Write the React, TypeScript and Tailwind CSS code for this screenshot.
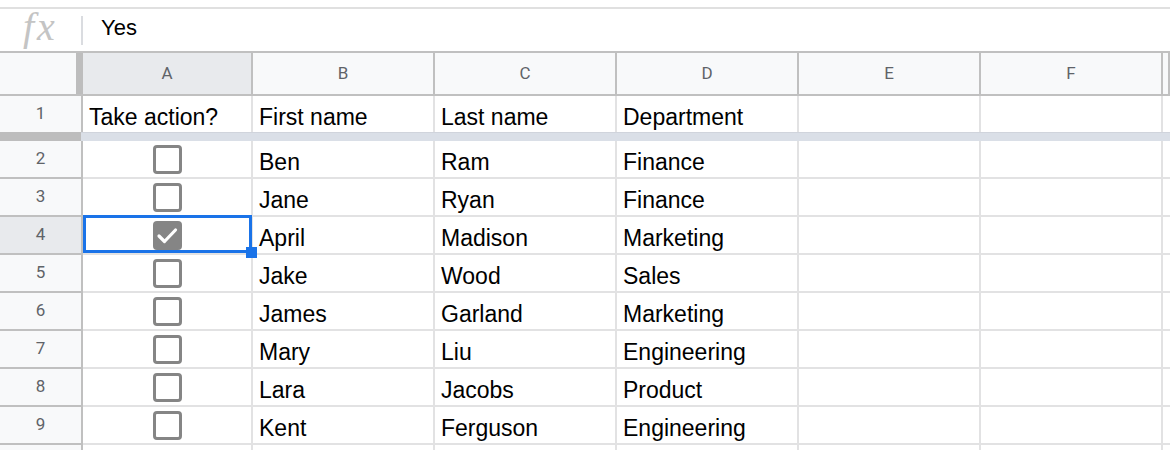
import React from 'react';

type Person = { first: string; last: string; dept: string; done: boolean };

const people: Person[] = [
  { first: 'Ben', last: 'Ram', dept: 'Finance', done: false },
  { first: 'Jane', last: 'Ryan', dept: 'Finance', done: false },
  { first: 'April', last: 'Madison', dept: 'Marketing', done: true },
  { first: 'Jake', last: 'Wood', dept: 'Sales', done: false },
  { first: 'James', last: 'Garland', dept: 'Marketing', done: false },
  { first: 'Mary', last: 'Liu', dept: 'Engineering', done: false },
  { first: 'Lara', last: 'Jacobs', dept: 'Product', done: false },
  { first: 'Kent', last: 'Ferguson', dept: 'Engineering', done: false },
];

const columns = ['A', 'B', 'C', 'D', 'E', 'F', ''];

const gridCols = 'grid grid-cols-[83px_170px_182px_182px_182px_182px_182px_1fr]';
const cellText = "flex items-end pb-[2px] pl-[6px] text-[23px] leading-[26px] text-black font-['Liberation_Sans',Arial,sans-serif] whitespace-nowrap overflow-hidden";
const headText = "flex items-center justify-center text-[17px] text-[#5f6368] font-['Roboto',sans-serif]";

const Checkbox = ({ checked }: { checked: boolean }) =>
  checked ? (
    <div className="w-[29px] h-[29px] rounded-[4px] bg-[#858585] flex items-center justify-center">
      <svg width="29" height="29" viewBox="0 0 29 29">
        <polyline points="6,15 11.5,20.5 22.5,9" fill="none" stroke="#fff" strokeWidth="3.2" strokeLinecap="round" strokeLinejoin="round" />
      </svg>
    </div>
  ) : (
    <div className="w-[29px] h-[29px] rounded-[4px] border-[3px] border-[#858585] bg-white" />
  );

export default function App() {
  return (
    <div className="w-[1170px] h-[450px] overflow-hidden bg-white">
      {/* formula bar */}
      <div className="h-[7px]" />
      <div className="h-[2px] bg-[#e0e0e0]" />
      <div className="h-[42px] flex items-center">
        <span className="w-[81px] pl-[23px] text-[40px] leading-none italic text-[#c4c4c4] font-['Liberation_Serif',serif] tracking-[3px] -mt-[6px]">
          fx
        </span>
        <div className="w-[2px] h-[29px] bg-[#dadce0]" />
        <span className="pl-[18px] text-[22px] leading-none text-black font-['Liberation_Sans',Arial,sans-serif] -mt-[5px]">
          Yes
        </span>
      </div>
      <div className="h-[2px] bg-[#c0c0c0]" />

      {/* column headers */}
      <div className={`${gridCols} h-[43px]`}>
        <div className="bg-[#f8f9fa] border-b-2 border-[#c0c0c0] flex justify-end">
          <div className="w-[7px] h-full bg-[#bdbdbd]" />
        </div>
        {columns.map((c, i) => (
          <div
            key={i}
            className={`${headText} border-b-2 border-r-2 border-[#c0c0c0] ${c === 'A' ? 'bg-[#e8eaed]' : 'bg-[#f8f9fa]'}`}
          >
            {c}
          </div>
        ))}
      </div>

      {/* frozen header row */}
      <div className={`${gridCols} h-[36px]`}>
        <div className={`${headText} bg-[#f8f9fa] border-r-2 border-[#c0c0c0]`}>1</div>
        <div className={`${cellText} border-r-2 border-[#e2e2e3]`}>Take action?</div>
        <div className={`${cellText} border-r-2 border-[#e2e2e3]`}>First name</div>
        <div className={`${cellText} border-r-2 border-[#e2e2e3]`}>Last name</div>
        <div className={`${cellText} border-r-2 border-[#e2e2e3]`}>Department</div>
        <div className="border-r-2 border-[#e2e2e3]" />
        <div className="border-r-2 border-[#e2e2e3]" />
        <div />
      </div>
      <div className="flex h-[9px]">
        <div className="w-[81px] bg-[#bdbdbd]" />
        <div className="flex-1 bg-[#dadfe7] border-t border-[#d0d4dc]" />
      </div>

      {/* data rows */}
      {people.map((p, i) => {
        const selected = p.done;
        return (
          <div key={i} className={`${gridCols} h-[38px]`}>
            <div
              className={`${headText} border-r-2 border-b-2 border-[#c0c0c0] ${selected ? 'bg-[#e8eaed]' : 'bg-[#f8f9fa]'}`}
            >
              {i + 2}
            </div>
            <div className="relative flex items-center justify-center border-r-2 border-b-2 border-[#e2e2e3]">
              <Checkbox checked={p.done} />
              {selected && (
                <>
                  <div className="absolute -top-[2px] left-0 right-[-1px] bottom-[0px] border-[3px] border-[#1a73e8] z-10" />
                  <div className="absolute left-[163px] top-[30px] w-[11px] h-[11px] bg-[#1a73e8] z-10" />
                </>
              )}
            </div>
            <div className={`${cellText} border-r-2 border-b-2 border-[#e2e2e3]`}>{p.first}</div>
            <div className={`${cellText} border-r-2 border-b-2 border-[#e2e2e3]`}>{p.last}</div>
            <div className={`${cellText} border-r-2 border-b-2 border-[#e2e2e3]`}>{p.dept}</div>
            <div className="border-r-2 border-b-2 border-[#e2e2e3]" />
            <div className="border-r-2 border-b-2 border-[#e2e2e3]" />
            <div className="border-b-2 border-[#e2e2e3]" />
          </div>
        );
      })}

      {/* next row, cut off at the bottom */}
      <div className={`${gridCols} h-[38px]`}>
        <div className="bg-[#f8f9fa] border-r-2 border-[#c0c0c0]" />
        {[0, 1, 2, 3, 4, 5].map((k) => (
          <div key={k} className="border-r-2 border-[#e2e2e3]" />
        ))}
        <div />
      </div>
    </div>
  );
}
